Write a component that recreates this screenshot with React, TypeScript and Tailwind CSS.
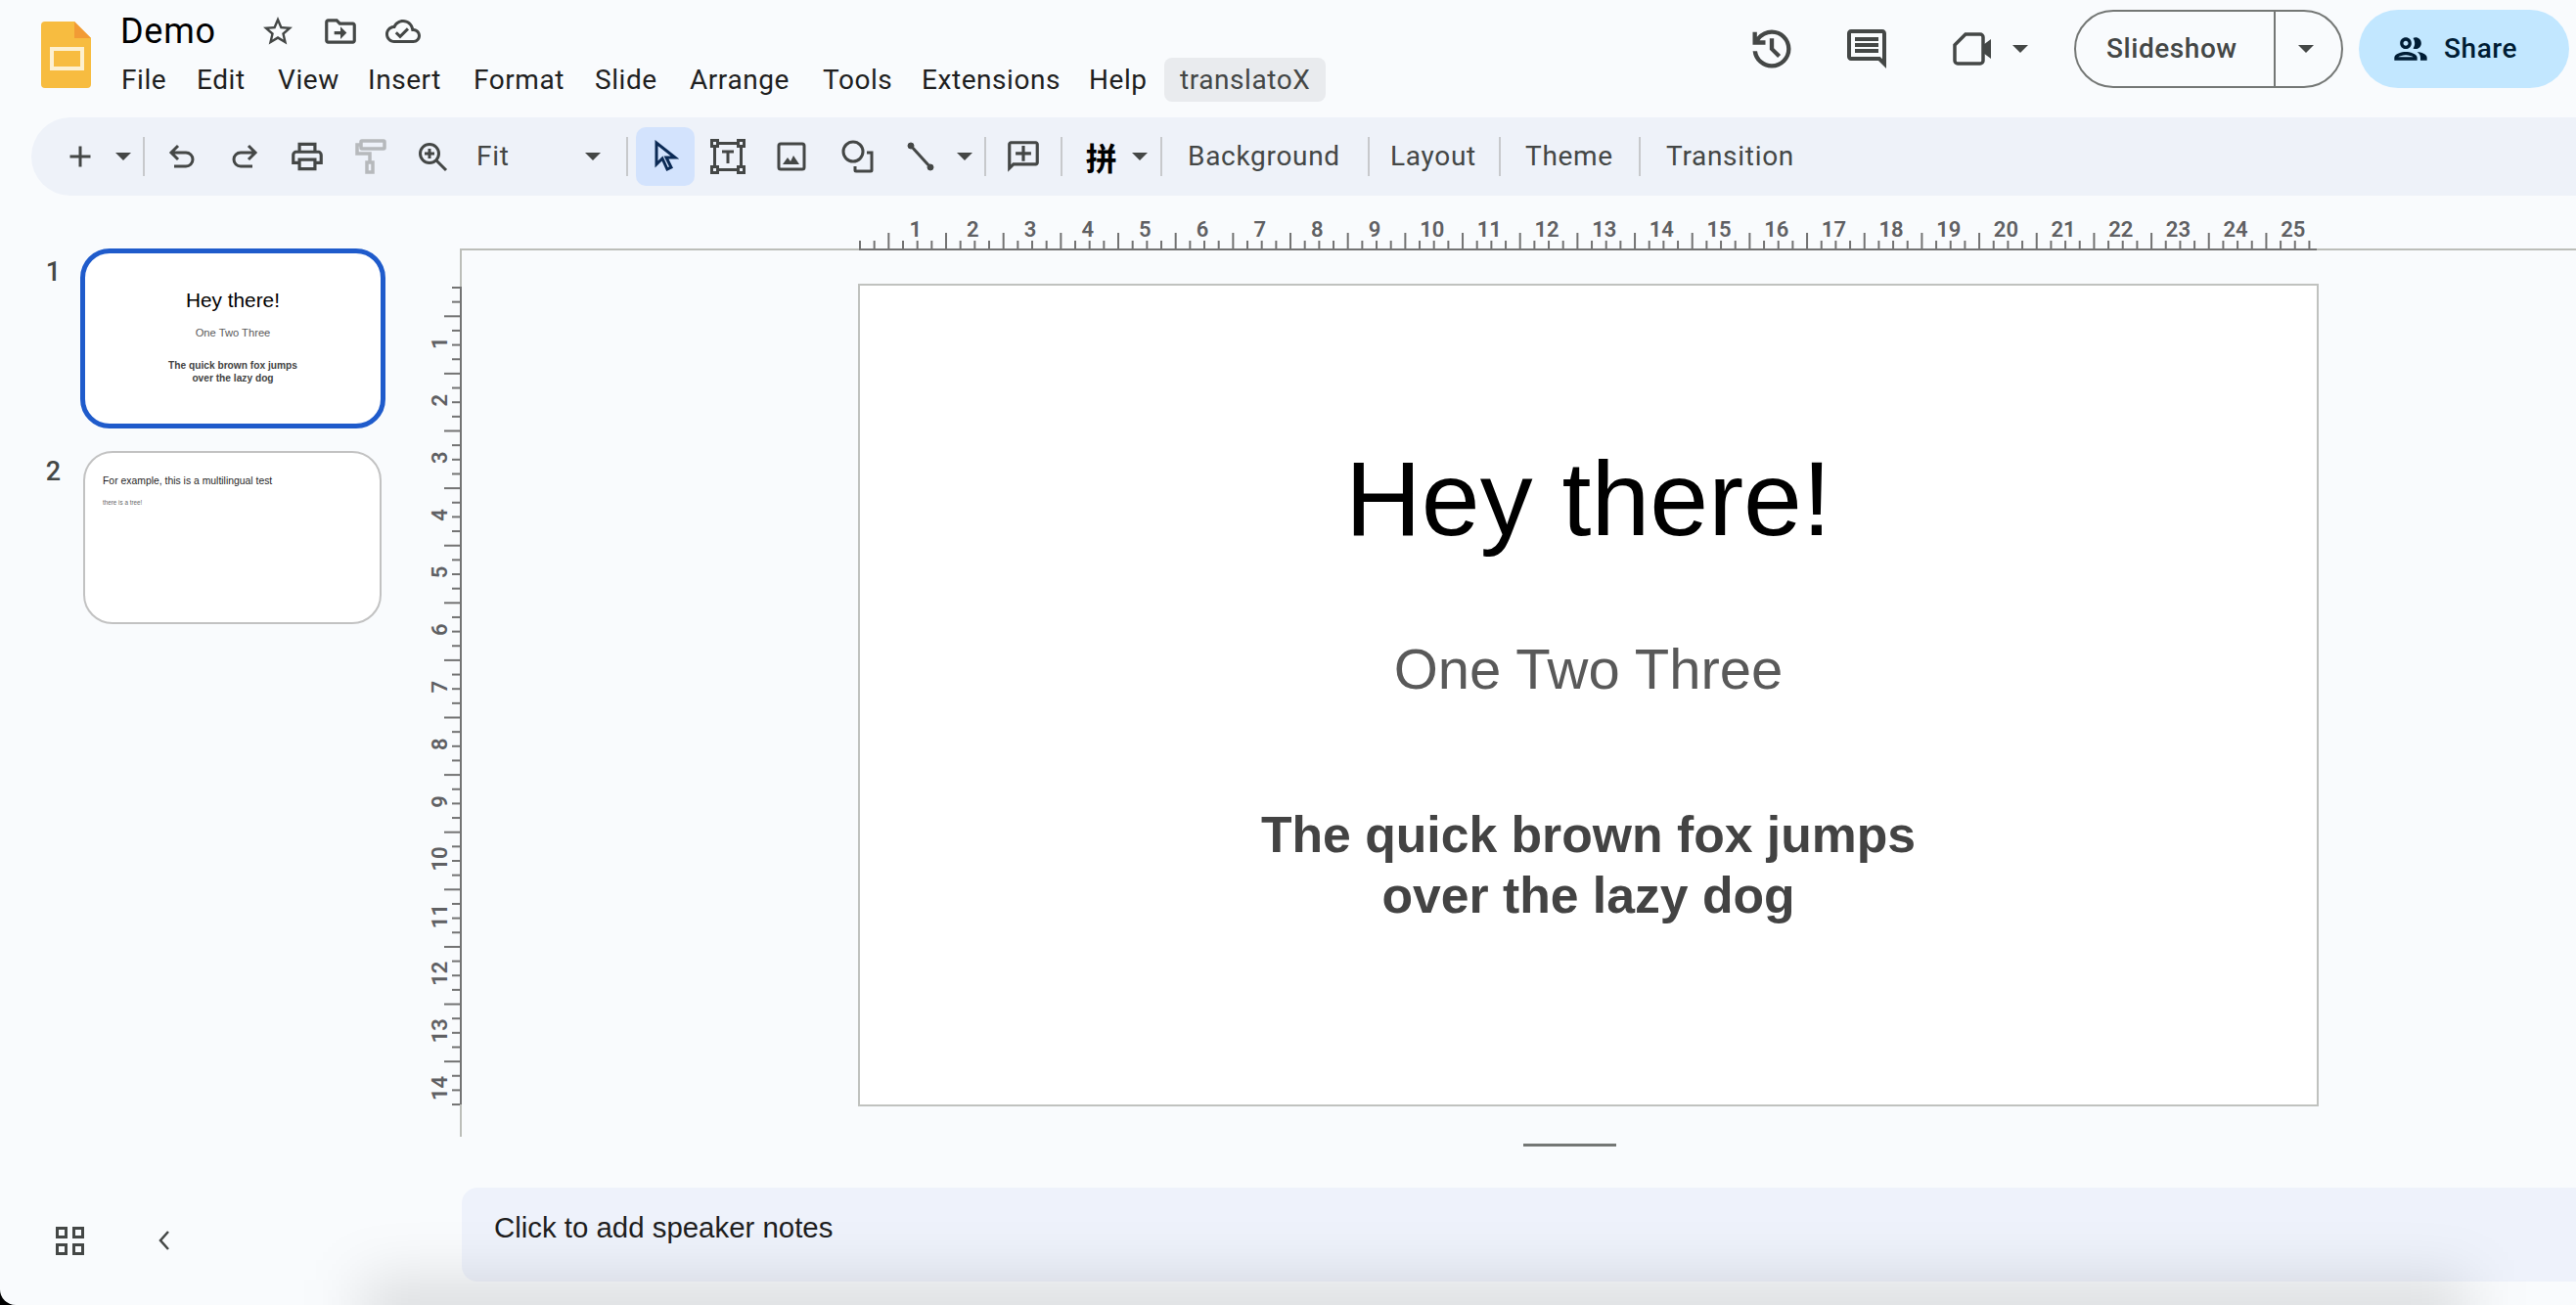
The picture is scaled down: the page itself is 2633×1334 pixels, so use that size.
import type { ReactNode } from 'react';

const ui = "font-['Roboto','Noto_Sans',sans-serif]";
const arial = "font-['Liberation_Sans',Arial,sans-serif]";

const menus = [
  { label: 'File', cls: 'w-[77px]' },
  { label: 'Edit', cls: 'w-[83px]' },
  { label: 'View', cls: 'w-[92px]' },
  { label: 'Insert', cls: 'w-[108px]' },
  { label: 'Format', cls: 'w-[124px]' },
  { label: 'Slide', cls: 'w-[97px]' },
  { label: 'Arrange', cls: 'w-[136px]' },
  { label: 'Tools', cls: 'w-[101px]' },
  { label: 'Extensions', cls: 'w-[171px]' },
  { label: 'Help', cls: 'w-[77px]' },
];

function Icon({ size, d, className }: { size: number; d: string; className?: string }) {
  return (
    <svg width={size} height={size} viewBox="0 0 24 24" fill="currentColor" className={className}>
      <path d={d} />
    </svg>
  );
}

function Caret({ className }: { className?: string }) {
  return (
    <svg width="16" height="8" viewBox="0 0 16 8" fill="currentColor" className={className}>
      <path d="M0 0h16L8 8z" />
    </svg>
  );
}

function Cell({ children, className = 'w-[64px]' }: { children: ReactNode; className?: string }) {
  return <div className={`flex h-[60px] shrink-0 items-center justify-center ${className}`}>{children}</div>;
}

function Sep({ className = '' }: { className?: string }) {
  return <div className={`h-[40px] w-[2px] shrink-0 bg-[#c7c9cc] ${className}`} />;
}

function Logo() {
  return (
    <svg width="51" height="68" viewBox="0 0 51 68" className="shrink-0">
      <path d="M4 0h30l17 17v47a4 4 0 0 1-4 4H4a4 4 0 0 1-4-4V4a4 4 0 0 1 4-4z" fill="#f7bc40" />
      <path d="M34 0l17 17H34z" fill="#f29b35" />
      <rect x="11" y="28" width="31" height="20" fill="#f7bc40" stroke="#fdf0d0" strokeWidth="4" />
    </svg>
  );
}

function HorizontalRuler() {
  const ox = 408;
  const step = 58.67;
  const ticks = Array.from({ length: 102 }, (_, i) => i);
  const labels = Array.from({ length: 25 }, (_, i) => i + 1);
  return (
    <svg width="2163" height="36" viewBox="0 0 2163 36" className="ml-[40px] block shrink-0">
      <rect x="0" y="34" width="2163" height="2" fill="#bcbeb9" />
      <rect x={ox} y="34" width="1490" height="2" fill="#737373" />
      {ticks.map((i) => {
        const x = ox + (i * step) / 4;
        const long = i % 4 === 2;
        return <rect key={i} x={x} y={long ? 18 : 26} width="2" height={long ? 16 : 8} fill="#737373" />;
      })}
      {labels.map((n) => (
        <text key={n} x={ox + n * step - 1} y="22" textAnchor="middle" fontSize="22" fontWeight="600" fontFamily="Roboto" fill="#5f6063">
          {n}
        </text>
      ))}
    </svg>
  );
}

function VerticalRuler() {
  const oy = 37;
  const step = 58.6;
  const ticks = Array.from({ length: 58 }, (_, i) => i);
  const labels = Array.from({ length: 14 }, (_, i) => i + 1);
  return (
    <svg width="42" height="906" viewBox="0 0 42 906" className="block shrink-0">
      <rect x="40" y="0" width="2" height="906" fill="#bcbeb9" />
      <rect x="40" y={oy} width="2" height="836" fill="#737373" />
      {ticks.map((i) => {
        const y = oy + (i * step) / 4;
        const long = i % 4 === 2;
        return <rect key={i} x={long ? 24 : 32} y={y} width={long ? 16 : 8} height="2" fill="#737373" />;
      })}
      {labels.map((n) => (
        <text
          key={n}
          x="0"
          y="0"
          transform={`translate(27 ${oy + n * step - 1}) rotate(-90)`}
          textAnchor="middle"
          fontSize="22"
          fontWeight="600"
          fontFamily="Roboto"
          fill="#5f6063"
        >
          {n}
        </text>
      ))}
    </svg>
  );
}

export default function App() {
  return (
    <div className="h-[1334px] w-[2633px] overflow-hidden bg-black">
      <div className={`relative flex h-full w-full flex-col overflow-hidden rounded-bl-[16px] bg-[#f9fbfd] ${ui}`}>
        {/* Header */}
        <header className="flex h-[120px] shrink-0">
          <div className="ml-[42px] mt-[22px]">
            <Logo />
          </div>
          <div className="ml-[30px] pt-[10px]">
            <div className="flex h-[44px] items-center">
              <span className="w-[126px] text-[36px] leading-[44px] tracking-[0.02em] text-black">Demo</span>
              <Icon size={36} className="ml-[17px] text-[#444746]" d="M22 9.24l-7.19-.62L12 2 9.19 8.63 2 9.24l5.46 4.73L5.82 21 12 17.27 18.18 21l-1.63-7.03L22 9.24zM12 15.4l-3.76 2.27 1-4.28-3.32-2.88 4.38-.38L12 6.1l1.71 4.04 4.38.38-3.32 2.88 1 4.28L12 15.4z" />
              <Icon size={38} className="ml-[27px] text-[#444746]" d="M20 6h-8l-2-2H4c-1.1 0-2 .9-2 2v12c0 1.1.9 2 2 2h16c1.1 0 2-.9 2-2V8c0-1.1-.9-2-2-2zm0 12H4V6h5.17l2 2H20v10zm-8-4H8v-2h4V9l4 4-4 4v-3z" />
              <Icon size={36} className="ml-[27px] text-[#444746]" d="M19.35 10.04C18.67 6.59 15.64 4 12 4 9.11 4 6.6 5.64 5.35 8.04 2.34 8.36 0 10.91 0 14c0 3.31 2.69 6 6 6h13c2.76 0 5-2.24 5-5 0-2.64-2.05-4.78-4.65-4.96zM19 18H6c-2.21 0-4-1.79-4-4 0-2.05 1.53-3.76 3.56-3.97l1.07-.11.5-.95C8.08 7.14 9.94 6 12 6c2.62 0 4.88 1.86 5.39 4.43l.3 1.5 1.53.11c1.56.1 2.78 1.41 2.78 2.96 0 1.65-1.35 3-3 3zm-9-3.82l-2.09-2.09L6.5 13.5 10 17l6.01-6.01-1.41-1.41z" />
            </div>
            <nav className="mt-[5px] flex h-[45px] items-center pl-[1px] text-[28px] tracking-[0.02em] text-[#1f1f1f]">
              {menus.map((m) => (
                <span key={m.label} className={m.cls}>
                  {m.label}
                </span>
              ))}
              <span className="flex h-[45px] w-[165px] items-center rounded-[8px] bg-[#e9ebee] pl-[16px] text-[#444746]">translatoX</span>
            </nav>
          </div>

          <div className="ml-auto mr-[7px] mt-[10px] flex h-[80px] items-center">
            <svg width="52" height="52" viewBox="0 -960 960 960" fill="currentColor" className="text-[#444746]">
              <path d="M480-120q-138 0-240.500-91.500T122-440h82q14 104 92.500 172T480-200q117 0 198.500-81.500T760-480q0-117-81.500-198.500T480-760q-69 0-129 32t-101 88h110v80H120v-240h80v94q51-64 124.500-99T480-840q75 0 140.500 28.500t114 77q48.500 48.500 77 114T840-480q0 75-28.500 140.500t-77 114q-48.500 48.500-114 77T480-120Zm112-192L440-464v-216h80v184l128 128-56 56Z" />
            </svg>
            <Icon size={48} className="ml-[47px] text-[#444746]" d="M21.99 4c0-1.1-.89-2-1.99-2H4c-1.1 0-2 .9-2 2v12c0 1.1.9 2 2 2h14l4 4-.01-18zM20 4v13.17L18.83 16H4V4h16zM6 12h12v2H6zm0-3h12v2H6zm0-3h12v2H6z" />
            <svg width="40" height="34" viewBox="0 0 40 34" fill="none" className="ml-[64px] text-[#444746]">
              <path d="M13 2h15a3 3 0 0 1 3 3v24a3 3 0 0 1-3 3H5a3 3 0 0 1-3-3V13z" stroke="currentColor" strokeWidth="3.5" />
              <path d="M31 13l8-6v20l-8-6z" fill="currentColor" />
            </svg>
            <Caret className="ml-[21px] text-[#444746]" />
            <div className="ml-[47px] flex h-[80px] w-[275px] overflow-hidden rounded-full border-2 border-[#747775] text-[#444746]">
              <div className="flex w-[202px] items-center pl-[31px] text-[28px] font-medium tracking-[0.02em]">Slideshow</div>
              <div className="flex flex-1 items-center justify-center border-l-2 border-[#747775] pr-[6px]">
                <Caret />
              </div>
            </div>
            <div className="ml-[16px] flex h-[80px] w-[215px] items-center rounded-full bg-[#c2e7ff] pl-[33px] text-[28px] font-medium tracking-[0.02em] text-[#001d35]">
              <Icon size={40} d="M9 13.75c-2.34 0-7 1.17-7 3.5V19h14v-1.75c0-2.33-4.66-3.5-7-3.5zM4.34 17c.84-.58 2.87-1.25 4.66-1.25s3.82.67 4.66 1.25H4.34zM9 12c1.93 0 3.5-1.57 3.5-3.5S10.93 5 9 5 5.5 6.57 5.5 8.5 7.07 12 9 12zm0-5c.83 0 1.5.67 1.5 1.5S9.83 10 9 10s-1.5-.67-1.5-1.5S8.17 7 9 7zm7.04 6.81c1.16.84 1.96 1.96 1.96 3.44V19h4v-1.75c0-2.02-3.5-3.17-5.96-3.44zM15 12c1.93 0 3.5-1.57 3.5-3.5S16.93 5 15 5c-.54 0-1.04.13-1.5.35.63.89 1 1.98 1 3.15s-.37 2.26-1 3.15c.46.22.96.35 1.5.35z" />
              <span className="ml-[14px]">Share</span>
            </div>
          </div>
        </header>

        {/* Toolbar */}
        <div className="ml-[32px] flex h-[80px] shrink-0 items-center rounded-l-[40px] bg-[#eef2f9] pl-[18px] text-[28px] tracking-[0.025em] text-[#444746]">
          <Cell><Icon size={36} d="M19 13h-6v6h-2v-6H5v-2h6V5h2v6h6v2z" /></Cell>
          <Cell className="w-[24px]"><Caret /></Cell>
          <Sep className="ml-[8px] mr-[6px]" />
          <Cell>
            <svg width="36" height="36" viewBox="0 0 36 36" fill="none" stroke="currentColor" strokeWidth="3">
              <path d="M14 7l-7 7 7 7M7 14h15a7 7 0 0 1 0 14H10" />
            </svg>
          </Cell>
          <Cell>
            <svg width="36" height="36" viewBox="0 0 36 36" fill="none" stroke="currentColor" strokeWidth="3">
              <path d="M22 7l7 7-7 7M29 14H14a7 7 0 0 0 0 14h12" />
            </svg>
          </Cell>
          <Cell><Icon size={38} d="M19 8h-1V3H6v5H5c-1.66 0-3 1.34-3 3v6h4v4h12v-4h4v-6c0-1.66-1.34-3-3-3zM8 5h8v3H8V5zm8 14H8v-4h8v4zm2-4v-2H6v2H4v-4c0-.55.45-1 1-1h14c.55 0 1 .45 1 1v4h-2z" /></Cell>
          <Cell>
            <svg width="34" height="36" viewBox="0 0 34 36" fill="none" stroke="#b6b9bc" strokeWidth="3.5">
              <rect x="8" y="2" width="24" height="8" rx="1" />
              <path d="M8 6H4v9h13v8" />
              <rect x="14" y="24" width="6" height="10" />
            </svg>
          </Cell>
          <Cell>
            <svg width="36" height="36" viewBox="0 0 36 36" fill="none" stroke="currentColor" strokeWidth="3">
              <circle cx="15" cy="15" r="9.5" />
              <path d="M15 10v10M10 15h10M22 22l10 10" />
            </svg>
          </Cell>
          <div className="w-[120px] pl-[13px]">Fit</div>
          <Cell className="w-[24px]"><Caret /></Cell>
          <Sep className="ml-[22px] mr-[8px]" />
          <Cell className="w-[60px] rounded-[10px] bg-[#d3e3fd]">
            <svg width="28" height="34" viewBox="0 0 28 34" fill="none" stroke="#0b2a55" strokeWidth="3">
              <path d="M5 3v22l6-6 5 11 4-2-5-10h9z" />
            </svg>
          </Cell>
          <Cell className="ml-[2px] w-[64px]">
            <svg width="36" height="36" viewBox="0 0 36 36" fill="none" stroke="currentColor" strokeWidth="3">
              <path d="M8 4.5h20M8 31.5h20M4.5 8v20M31.500 8v20" />
              <rect x="1.500" y="1.500" width="6" height="6" />
              <rect x="28.500" y="1.500" width="6" height="6" />
              <rect x="1.500" y="28.500" width="6" height="6" />
              <rect x="28.500" y="28.500" width="6" height="6" />
              <path d="M12 13h12M18 13v12" />
            </svg>
          </Cell>
          <Cell className="ml-[1px] w-[64px]">
            <svg width="30" height="30" viewBox="0 0 30 30" fill="none">
              <rect x="2" y="2" width="26" height="26" rx="2" stroke="currentColor" strokeWidth="3" />
              <path d="M6 23l5-7 3 4 3-6 6 9z" fill="currentColor" />
            </svg>
          </Cell>
          <Cell className="ml-[4px] w-[64px]">
            <svg width="34" height="34" viewBox="0 0 34 34" fill="none" stroke="currentColor" strokeWidth="3">
              <circle cx="12" cy="12" r="10" />
              <path d="M26 13h5v18a1 1 0 0 1-1 1H15a1 1 0 0 1-1-1v-4" />
            </svg>
          </Cell>
          <Cell>
            <svg width="30" height="30" viewBox="0 0 30 30" fill="currentColor" stroke="currentColor">
              <path d="M5 4l20 22" strokeWidth="3" />
              <circle cx="5" cy="4" r="3" />
              <circle cx="25" cy="26" r="3" />
            </svg>
          </Cell>
          <Cell className="ml-[1px] w-[24px]"><Caret /></Cell>
          <Sep className="ml-[8px]" />
          <Cell className="ml-[6px] w-[64px]"><Icon size={38} d="M20 2H4c-1.1 0-2 .9-2 2v18l4-4h14c1.1 0 2-.9 2-2V4c0-1.1-.9-2-2-2zm0 14H5.170L4 17.170V4h16v12zM13 5h-2v4H7v2h4v4h2v-4h4V9h-4z" /></Cell>
          <Sep className="ml-[6px]" />
          <Cell className="ml-[13px] w-[54px]">
            <span className="font-['Noto_Sans_CJK_SC',sans-serif] text-[32px] font-bold text-black">拼</span>
          </Cell>
          <Cell className="w-[24px]"><Caret /></Cell>
          <Sep className="ml-[9px]" />
          <div className="w-[210px] pl-[26px]">Background</div>
          <Sep />
          <div className="w-[132px] pl-[21px]">Layout</div>
          <Sep />
          <div className="w-[141px] pl-[25px]">Theme</div>
          <Sep />
          <div className="pl-[26px]">Transition</div>
        </div>

        {/* Body */}
        <div className="flex min-h-0 flex-1">
          {/* Filmstrip */}
          <aside className="flex w-[430px] shrink-0 flex-col justify-between pt-[54px]">
            <div>
              <div className="flex">
                <span className="mt-[8px] w-[62px] text-right text-[27px] font-medium leading-[32px] text-[#444746]">1</span>
                <div className={`ml-[20px] flex h-[184px] w-[312px] flex-col items-center rounded-[30px] border-[5px] border-[#1f5bcb] bg-white pt-[36px] text-center ${arial}`}>
                  <p className="text-[20.800px] leading-[24px] text-black">Hey there!</p>
                  <p className="mt-[14px] text-[11.200px] leading-[14px] text-[#595959]">One Two Three</p>
                  <p className="mt-[21px] text-[10.200px] font-bold leading-[12.500px] text-[#434343]">
                    The quick brown fox jumps
                    <br />
                    over the lazy dog
                  </p>
                </div>
              </div>
              <div className="mt-[23px] flex">
                <span className="mt-[5px] w-[62px] text-right text-[27px] font-medium leading-[32px] text-[#444746]">2</span>
                <div className={`ml-[23px] h-[177px] w-[305px] rounded-[30px] border-2 border-[#c2c2c2] bg-white pl-[18px] pt-[22px] ${arial}`}>
                  <p className="text-[10.400px] leading-[14px] text-[#1f1f1f]">For example, this is a multilingual test</p>
                  <p className="mt-[11px] text-[6.300px] leading-[8px] text-[#666666]">there is a tree!</p>
                </div>
              </div>
            </div>
            <div className="mb-[52px] ml-[57px] flex h-[28px] items-center text-[#444746]">
              <div className="grid grid-cols-2 gap-[5px]">
                <div className="h-[12px] w-[12px] border-[3px] border-[#444746]" />
                <div className="h-[12px] w-[12px] border-[3px] border-[#444746]" />
                <div className="h-[12px] w-[12px] border-[3px] border-[#444746]" />
                <div className="h-[12px] w-[12px] border-[3px] border-[#444746]" />
              </div>
              <svg width="14" height="20" viewBox="0 0 14 20" fill="none" stroke="currentColor" strokeWidth="2.500" className="ml-[75px]">
                <path d="M11 1L3 10l8 9" />
              </svg>
            </div>
          </aside>

          {/* Editor */}
          <main className="flex min-w-0 flex-1 flex-col pt-[20px]">
            <HorizontalRuler />
            <div className="flex">
              <VerticalRuler />
              <section className={`ml-[405px] mt-[34px] flex h-[841px] w-[1493px] flex-col items-center border-2 border-[#c0c2bf] bg-white pt-[153px] text-center ${arial}`}>
                <h1 className="text-[107.700px] leading-[130px] text-black">Hey there!</h1>
                <p className="mt-[76px] text-[58px] leading-[66px] text-[#595959]">One Two Three</p>
                <p className="mt-[105px] text-[51.700px] font-bold leading-[62px] text-[#434343]">
                  The quick brown fox jumps
                  <br />
                  over the lazy dog
                </p>
              </section>
            </div>
            <div className="ml-[1127px] mt-[7px] h-[3px] w-[95px] bg-[#747775]" />
            <div className={`ml-[42px] mt-[42px] flex h-[96px] items-start rounded-l-[16px] bg-[#eef2fb] pl-[33px] pt-[22px] text-[29.400px] leading-[38px] text-[#1f1f1f] ${arial}`}>
              Click to add speaker notes
            </div>
          </main>
        </div>

        {/* window shadow along the bottom edge */}
        <div className="pointer-events-none absolute bottom-[-44px] left-[370px] right-[110px] h-[70px] bg-black/12 blur-[30px]" />
      </div>
    </div>
  );
}
